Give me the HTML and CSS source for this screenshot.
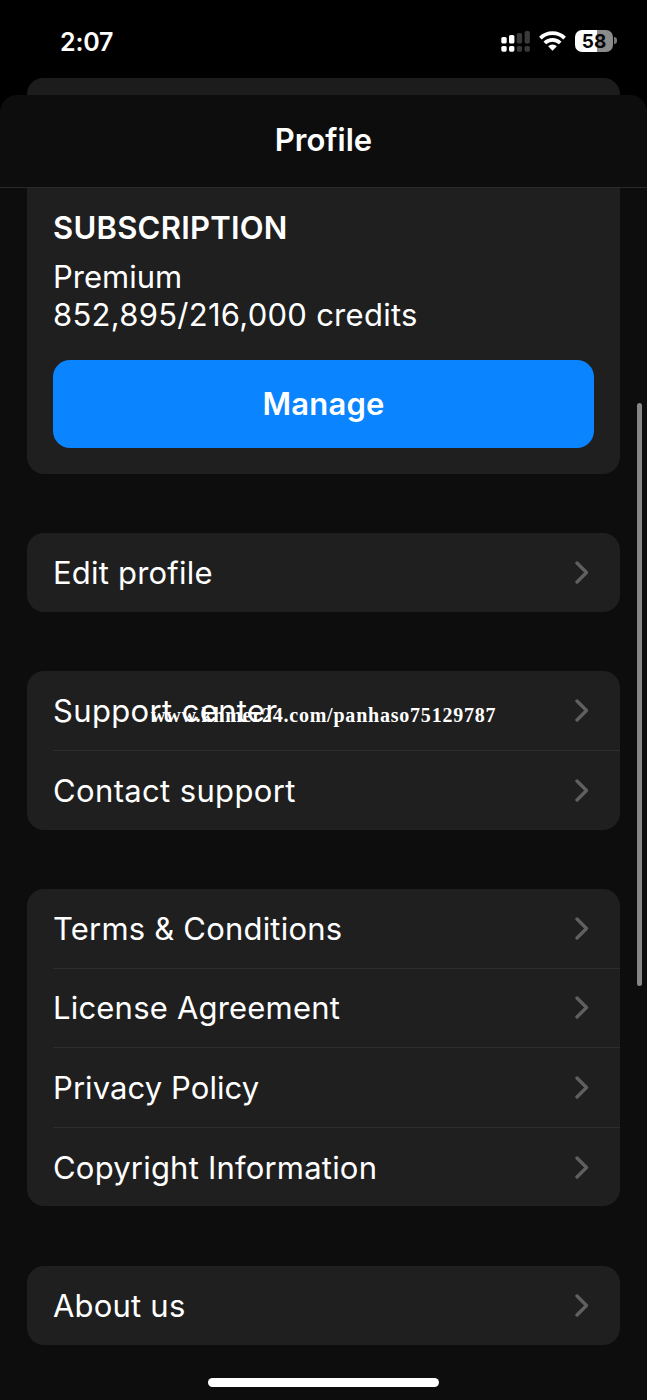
FILE: index.html
```html
<!DOCTYPE html>
<html lang="en">
<head>
<meta charset="utf-8">
<title>Profile</title>
<link rel="stylesheet" href="styles.css">
</head>
<body>
<div class="phone">
  <header class="status">
    <span class="time">2:07</span>
    <div class="indicators">
      <svg class="signal" width="29" height="21" viewBox="0 0 29 21"><g fill="#fff"><rect x="0.3" y="6" width="5.4" height="6.5" rx="1.6"/><rect x="0.3" y="15" width="5.4" height="5.7" rx="1.6"/><rect x="8" y="4" width="5.4" height="8.5" rx="1.6"/><rect x="8" y="15" width="5.4" height="5.7" rx="1.6"/></g><g fill="#3a3a3a"><rect x="15.8" y="2" width="5.3" height="10.5" rx="1.6"/><rect x="15.8" y="15" width="5.3" height="5.7" rx="1.6"/><rect x="23.6" y="0" width="5.3" height="12.5" rx="1.6"/><rect x="23.6" y="15" width="5.3" height="5.7" rx="1.6"/></g></svg>
      <svg class="wifi" width="27" height="20" viewBox="0 0 27 20" fill="none" stroke="#fff" stroke-width="3.8"><path d="M1.4 7.2A17.2 17.2 0 0 1 25.6 7.2"/><path d="M5.8 12A11 11 0 0 1 21.2 12"/><path d="M9.1 15.3A6.3 6.3 0 0 1 17.9 15.3L13.5 19.8Z" fill="#fff" stroke="none"/></svg>
      <div class="battery"><span>58</span></div>
    </div>
  </header>
  <div class="backdrop"></div>
  <main class="sheet">
    <h1 class="title">Profile</h1>
    <section class="subscription">
      <h2>SUBSCRIPTION</h2>
      <p>Premium</p>
      <p class="credits">852,895/216,000 credits</p>
      <button class="manage">Manage</button>
    </section>
    <section class="group">
      <a class="row"><span>Edit profile</span><svg class="chevron" viewBox="0 0 14 23"><path d="M2 2L11.5 11.5L2 21"/></svg></a>
    </section>
    <section class="group">
      <a class="row"><span class="wide">Support center</span><svg class="chevron" viewBox="0 0 14 23"><path d="M2 2L11.5 11.5L2 21"/></svg></a>
      <a class="row"><span class="wide">Contact support</span><svg class="chevron" viewBox="0 0 14 23"><path d="M2 2L11.5 11.5L2 21"/></svg></a>
    </section>
    <section class="group">
      <a class="row"><span>Terms &amp; Conditions</span><svg class="chevron" viewBox="0 0 14 23"><path d="M2 2L11.5 11.5L2 21"/></svg></a>
      <a class="row"><span>License Agreement</span><svg class="chevron" viewBox="0 0 14 23"><path d="M2 2L11.5 11.5L2 21"/></svg></a>
      <a class="row"><span class="narrow">Privacy Policy</span><svg class="chevron" viewBox="0 0 14 23"><path d="M2 2L11.5 11.5L2 21"/></svg></a>
      <a class="row"><span>Copyright Information</span><svg class="chevron" viewBox="0 0 14 23"><path d="M2 2L11.5 11.5L2 21"/></svg></a>
    </section>
    <section class="group">
      <a class="row"><span>About us</span><svg class="chevron" viewBox="0 0 14 23"><path d="M2 2L11.5 11.5L2 21"/></svg></a>
    </section>
  </main>
  <div class="watermark">www.khmer24.com/panhaso75129787</div>
  <div class="scrollbar"></div>
  <div class="home"></div>
</div>
</body>
</html>
```
FILE: styles.css
```css
* { box-sizing: border-box; }
body { margin: 0; background: #000; color: #fff; font-family: Inter, sans-serif; }
.phone { position: relative; width: 647px; height: 1400px; overflow: hidden; }
.status { height: 78px; display: flex; justify-content: space-between; padding: 0 34px 0 60px; }
.time { font-size: 25px; font-weight: 600; line-height: 84px; letter-spacing: -.2px; }
.indicators { display: flex; gap: 9px; padding-top: 31px; }
.battery { position: relative; width: 38px; height: 22px; margin-top: -1px; border-radius: 7px; background: linear-gradient(90deg, #fff 58%, #8b8b8b 58%); color: #080808; font-size: 19px; font-weight: 700; line-height: 23px; text-align: center; }
.battery::after { content: ""; position: absolute; left: 39px; top: 7px; width: 3px; height: 7px; border-radius: 0 3px 3px 0; background: #777; }
.backdrop { height: 17px; margin: 0 27px; border-radius: 16px 16px 0 0; background: #1c1c1c; }
.sheet { height: 1305px; background: #0d0d0d; border-radius: 17px 17px 0 0; }
.title { height: 93px; margin: 0; border-bottom: 1px solid #2a2a2a; text-align: center; font-size: 31px; font-weight: 600; line-height: 90px; }
.subscription { height: 286px; margin: 0 27px 59px; padding: 21px 26px 26px; border-radius: 0 0 17px 17px; background: #1f1f1f; }
.subscription h2 { margin: 0 0 11px; font-size: 31px; font-weight: 600; line-height: 38px; letter-spacing: .25px; }
.subscription p { margin: 0; font-size: 31px; font-weight: 400; line-height: 38px; }
.subscription .credits { letter-spacing: .27px; }
.manage { display: block; width: 100%; height: 88px; margin-top: 26px; padding: 0 0 2px; border: 0; border-radius: 17px; background: #0a84ff; color: #fff; font: 600 31px Inter, sans-serif; letter-spacing: .2px; }
.group { margin: 0 27px 59.2px; border-radius: 17px; background: #1f1f1f; }
.row { display: flex; align-items: center; justify-content: space-between; height: 78.9px; margin-left: 26px; padding-right: 30px; font-size: 31px; font-weight: 400; letter-spacing: .2px; }
.row .wide { letter-spacing: .36px; }
.row .narrow { letter-spacing: .08px; }
.row + .row { height: 79.6px; border-top: 1px solid #2d2d2d; }
.chevron { width: 14px; height: 23px; margin-right: 1px; fill: none; stroke: #606062; stroke-width: 3.3; stroke-linecap: round; stroke-linejoin: round; }
.watermark { position: absolute; left: 151px; top: 703px; font: bold 20px/24px "Liberation Serif", serif; letter-spacing: .78px; white-space: nowrap; }
.scrollbar { position: absolute; left: 637px; top: 403px; width: 5px; height: 583px; border-radius: 3px; background: #868686; }
.home { position: absolute; left: 208px; top: 1378px; width: 231px; height: 9px; border-radius: 5px; background: #fff; }
```
